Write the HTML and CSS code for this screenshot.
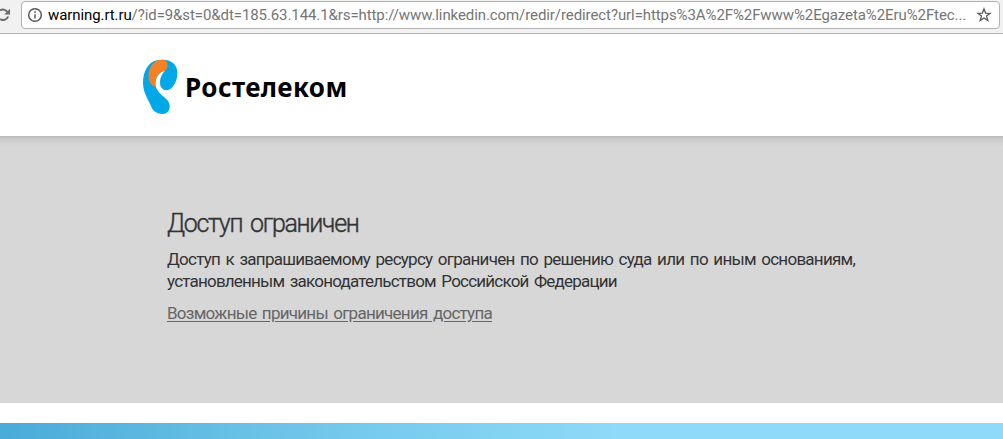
FILE: index.html
```html
<!DOCTYPE html>
<html lang="ru">
<head>
  <meta charset="UTF-8" />
  <title>Ростелеком</title>
  <link rel="stylesheet" href="styles.css">
</head>
<body>
  <div class="toolbar">
    <svg class="reload" width="11" height="16" viewBox="0 0 11 16">
      <path d="M0 3.4A5.6 5.6 0 0 1 7.4 5M8.2 9.5A5.6 5.6 0 0 1 0 12.2" />
      <path class="fill" d="M10 1.8V7.6H4.2Z" />
    </svg>
    <div class="address">
      <svg class="info" width="16" height="16" viewBox="0 0 16 16">
        <circle cx="8" cy="8" r="6.3" />
        <path d="M8 7.2V11.4M8 4.3V5.9" />
      </svg>
      <span class="url"><span class="host">warning.rt.ru</span><span class="path">/?id=9&amp;st=0&amp;dt=185.63.144.1&amp;rs=http://www.linkedin.com/redir/redirect?url=https%3A%2F%2Fwww%2Egazeta%2Eru%2Ftec...</span></span>
      <svg class="star" width="16" height="16" viewBox="0 0 16 16">
        <path d="M8 1.9L9.6 6.1L14.1 6.3L10.6 9.1L11.8 13.5L8 11L4.2 13.5L5.4 9.1L1.9 6.3L6.4 6.1Z" />
      </svg>
    </div>
  </div>

  <header class="header">
    <svg class="logo" width="35" height="56" viewBox="38 27 105 168">
      <path fill="#00a8e8" d="M80 31C52 36 38 68 38 98C38 128 53 146 61 166C67 184 81 192 97 192C114 191 121 176 117 161C111 141 80 136 75 103C74 81 88 65 104 62C91 74 86 95 91 109C96 121 109 124 119 118C134 107 142 86 141 66C140 43 122 29 98 29Z" />
      <path fill="#f58025" d="M88 29C65 34 52 60 55 85C57 98 66 108 76 112C71 86 84 65 105 62C113 52 115 38 104 30Z" />
    </svg>
    <span class="brand">Ростелеком</span>
  </header>

  <main class="content">
    <h1>Доступ ограничен</h1>
    <p>Доступ к запрашиваемому ресурсу ограничен по решению суда или по иным основаниям,<br>
    <span class="tight">установленным законодательством Российской Федерации</span></p>
    <a href="#">Возможные причины ограничения доступа</a>
  </main>

  <div class="banner"></div>
</body>
</html>
```

FILE: styles.css
```css
* {
  box-sizing: border-box;
}

body {
  margin: 0;
  height: 439px;
  overflow: hidden;
  background: #fff;
  font-family: Roboto, "Liberation Sans", sans-serif;
}

.toolbar {
  display: flex;
  height: 34px;
  padding: 1px 3px 0 0;
  background: #f2f1f2;
  border-bottom: 1px solid #b5b4b5;
}

.toolbar svg {
  flex: none;
  fill: none;
  stroke: #5a5a5a;
  stroke-width: 1.5;
}

.toolbar .reload {
  margin: 6px 10px 0 0;
  stroke: #6b6b6b;
  stroke-width: 2;
}

.reload .fill {
  fill: #6b6b6b;
  stroke: none;
}

.toolbar .star {
  stroke-width: 1.3;
}

.address {
  display: flex;
  flex: 1;
  min-width: 0;
  align-items: center;
  height: 28px;
  padding: 0 7px 0 5px;
  background: #fff;
  border: 1px solid #b3b2b3;
  border-radius: 4px;
}

.url {
  flex: 1;
  min-width: 0;
  margin-left: 5px;
  font-size: 15px;
  line-height: 20px;
  letter-spacing: -0.09px;
  color: #757575;
  white-space: nowrap;
}

.host {
  color: #000;
}

.header {
  display: flex;
  height: 102px;
  padding: 25px 0 0 143px;
}

.brand {
  margin: 10px 0 0 7px;
  font: bold 26px/36px "Noto Sans", sans-serif;
  letter-spacing: 0.4px;
  color: #000;
}

.content {
  height: 267px;
  padding: 71px 0 0 167px;
  background: linear-gradient(#b9b9b9, #cbcbcb 3px, #d7d7d7 10px);
  color: #333;
}

h1 {
  margin: 0;
  font-size: 25px;
  font-weight: 300;
  line-height: 34px;
  letter-spacing: -1.3px;
  word-spacing: 3px;
  -webkit-text-stroke: 0.4px #333;
}

p {
  margin: 7px 0 10px;
  font-size: 17px;
  line-height: 22px;
  letter-spacing: -0.74px;
  word-spacing: 2px;
  white-space: nowrap;
}

.tight {
  letter-spacing: -0.79px;
}

a {
  font-size: 17px;
  line-height: 22px;
  letter-spacing: -0.74px;
  word-spacing: 1.9px;
  color: #666;
  text-underline-offset: 2px;
}

.banner {
  height: 16px;
  margin-top: 20px;
  background: linear-gradient(to right, #4aabd8, #74c9eb 340px, #8edaf8 620px);
}
```
